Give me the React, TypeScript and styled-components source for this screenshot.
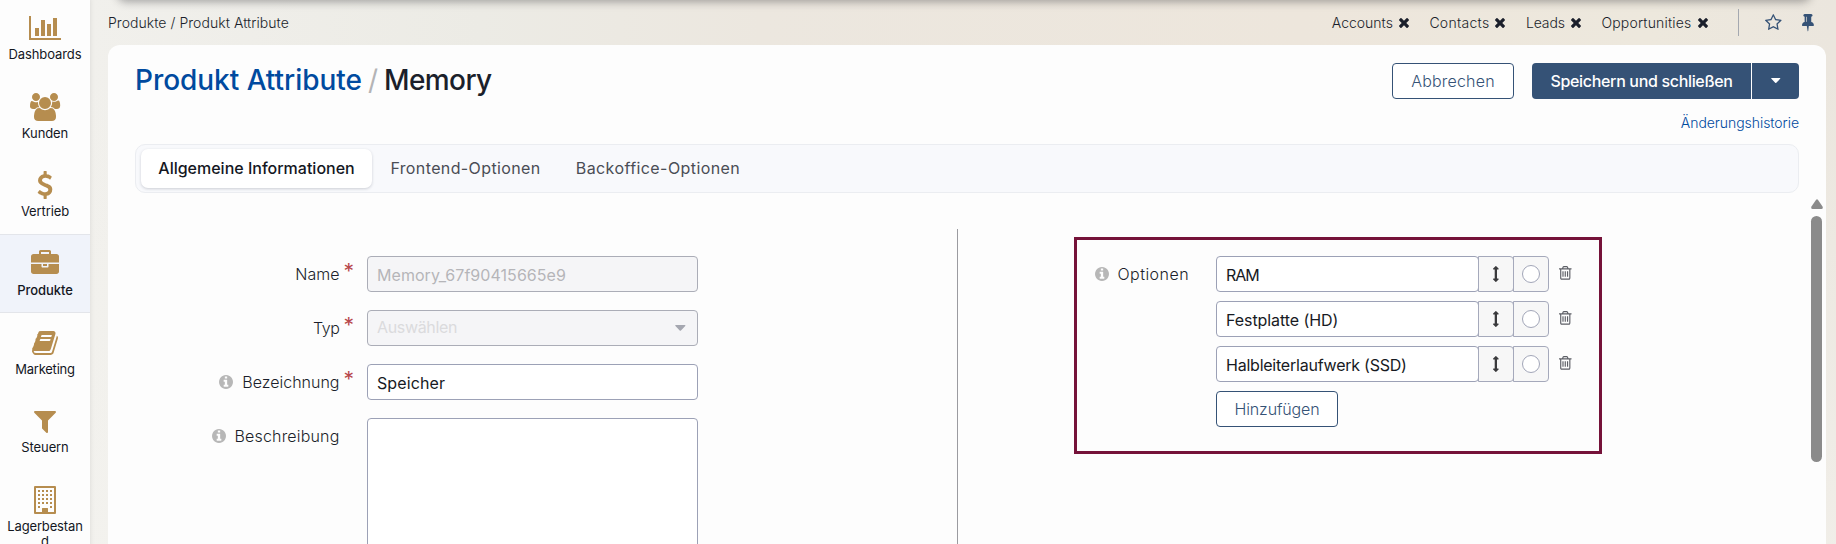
import React from 'react';
import styled, { createGlobalStyle, css } from 'styled-components';

const GlobalStyle = createGlobalStyle`
  *, *::before, *::after { box-sizing: border-box; }
  body {
    margin: 0;
    overflow: hidden;
    background: #f3f1ed;
    color: #1b1f2b;
    font-family: Inter, "Liberation Sans", sans-serif;
  }
  button, input, textarea { font-family: inherit; }
`;

const color = {
  gold: '#b68d4f',
  navy: '#355276',
  link: '#004a9f',
  surface: '#fdfdfd',
  fieldBorder: '#9ca1b6',
  wine: '#751239',
};

/* ---------- icons ---------- */

const icons = {
  chart: {
    box: [0, 0, 2048, 1792],
    d: 'M640 896v512h-256v-512h256zm384-512v1024h-256v-1024h256zm1024 1152v128h-2048v-1536h128v1408h1920zm-640-896v768h-256v-768h256zm384-384v1152h-256v-1152h256z',
  },
  users: {
    box: [0, 0, 1920, 1792],
    d: 'M593 896q-162 5-265 128h-134q-82 0-138-40.5t-56-118.5q0-353 124-353 6 0 43.5 21t97.5 42.5 119 21.5q67 0 133-23-5 37-5 66 0 159 93 293zm1071 637q0 120-73 189.5t-194 69.5h-874q-121 0-194-69.5t-73-189.5q0-53 3.5-103.5t14-109 26.5-108.5 43-97.5 62-81 85.5-53.5 111.5-20q10 0 43 21.5t73 48 107 48 135 21.5 135-21.5 107-48 73-48 43-21.5q61 0 111.5 20t85.5 53.5 62 81 43 97.5 26.5 108.5 14 109 3.5 103.5zm-1024-1277q0 106-75 181t-181 75-181-75-75-181 75-181 181-75 181 75 75 181zm704 384q0 159-112.5 271.5t-271.5 112.5-271.5-112.5-112.5-271.5 112.5-271.5 271.5-112.5 271.5 112.5 112.5 271.5zm576 225q0 78-56 118.5t-138 40.5h-134q-103-123-265-128 93-134 93-293 0-29-5-66 66 23 133 23 59 0 119-21.5t97.5-42.5 43.5-21q124 0 124 353zm-128-609q0 106-75 181t-181 75-181-75-75-181 75-181 181-75 181 75 75 181z',
  },
  dollar: {
    box: [0, 0, 1792, 1792],
    d: 'M1362 1185q0 153-99.5 263.5t-258.5 136.5v175q0 14-9 23t-23 9h-135q-13 0-22.5-9.5t-9.5-22.5v-175q-66-9-127.5-31t-101.5-44.5-74-48-46.5-37.5-17.5-18q-17-21-2-41l103-135q7-10 23-12 15-2 24 9l2 2q113 99 243 125 37 8 74 8 81 0 142.5-43t61.5-122q0-28-15-53t-33.5-42-58.5-37.5-66-32-80-32.5q-39-16-61.5-25t-61.5-26.5-62.5-31-56.5-35.5-53.5-42.5-43.5-49-35.5-58-21-66.5-8.5-78q0-138 98-242t255-134v-180q0-13 9.5-22.5t22.5-9.5h135q14 0 23 9t9 23v176q57 6 110.5 23t87 33.5 63.5 37.5 39 29 15 14q17 18 5 38l-81 146q-8 15-23 16-14 3-27-7-3-3-14.5-12t-39-26.5-58.5-32-74.5-26-85.5-11.5q-95 0-155 43t-60 111q0 26 8.5 48t29.5 41.5 39.5 33 56 31 60.5 27 70 27.5q53 20 81 31.5t76 35 75.5 42.5 62 50 53 63.5 31.5 76.5 13 94z',
  },
  briefcase: {
    box: [0, 0, 1792, 1792],
    d: 'M640 256h512v-128h-512v128zm1152 640v480q0 66-47 113t-113 47h-1472q-66 0-113-47t-47-113v-480h672v160q0 26 19 45t45 19h320q26 0 45-19t19-45v-160h672zm-768 0v128h-256v-128h256zm768-480v384h-1792v-384q0-66 47-113t113-47h352v-160q0-40 28-68t68-28h576q40 0 68 28t28 68v160h352q66 0 113 47t47 113z',
  },
  book: {
    box: [0, 0, 1792, 1792],
    d: 'M1703 478q40 57 18 129l-275 906q-19 64-76.5 107.5t-122.5 43.5h-923q-77 0-148.5-53.5t-99.5-131.5q-24-67-2-127 0-4 3-27t4-37q1-8-3-21.5t-3-19.5q2-11 8-21t16.5-23.5 16.5-23.5q23-38 45-91.5t30-91.5q3-10 .5-30t-.5-28q3-11 17-28t17-23q21-36 42-92t25-90q1-9-2.5-32t.5-28q4-13 22-30.5t22-22.5q19-26 42.5-84.5t27.5-96.5q1-8-3-25.5t-2-26.5q2-8 9-18t18-23 17-21q8-12 16.5-30.5t15-35 16-36 19.5-32 26.5-23.5 36-11.5 47.5 5.5l-1 3q38-9 51-9h761q74 0 114 56t18 130l-274 906q-36 119-71.5 153.5t-128.5 34.5h-869q-27 0-38 15-11 16-1 43 24 70 144 70h923q29 0 56-15.5t35-41.5l300-987q7-22 5-57 38 15 59 43zm-1064 2q-4 13 2 22.5t20 9.5h608q13 0 25.5-9.5t16.5-22.5l21-64q4-13-2-22.5t-20-9.5h-608q-13 0-25.5 9.5t-16.5 22.5zm-83 256q-4 13 2 22.5t20 9.5h608q13 0 25.5-9.5t16.5-22.5l21-64q4-13-2-22.5t-20-9.5h-608q-13 0-25.5 9.5t-16.5 22.5z',
  },
  filter: {
    box: [0, 0, 1792, 1792],
    d: 'M1595 295q17 41-14 70l-493 493v742q0 42-39 59-13 5-25 5-27 0-45-19l-256-256q-19-19-19-45v-486l-493-493q-31-29-14-70 17-39 59-39h1280q42 0 59 39z',
  },
  building: {
    box: [0, 0, 1792, 1792],
    d:
      'M192 64q0-64 64-64h1280q64 0 64 64v1664q0 64-64 64h-1280q-64 0-64-64zM320 128v1536h384v-224q0-32 32-32h320q32 0 32 32v224h384v-1536z' +
      [256, 512, 768, 1024]
        .map((y) => [448, 704, 960, 1216].map((x) => `M${x} ${y}h128v128h-128z`).join(''))
        .join('') +
      'M448 1280h128v128h-128zM1216 1280h128v128h-128z',
  },
  info: {
    box: [128, 128, 1536, 1536],
    d: 'M1152 1376v-160q0-14-9-23t-23-9h-96v-512q0-14-9-23t-23-9h-320q-14 0-23 9t-9 23v160q0 14 9 23t23 9h96v320h-96q-14 0-23 9t-9 23v160q0 14 9 23t23 9h448q14 0 23-9t9-23zm-128-896v-160q0-14-9-23t-23-9h-192q-14 0-23 9t-9 23v160q0 14 9 23t23 9h192q14 0 23-9t9-23zm640 416q0 209-103 385.5t-279.5 279.5-385.5 103-385.5-103-279.5-279.5-103-385.5 103-385.5 279.5-279.5 385.5-103 385.5 103 279.5 279.5 103 385.5z',
  },
  trash: {
    box: [192, 128, 1408, 1536],
    d: 'M704 736v576q0 14-9 23t-23 9h-64q-14 0-23-9t-9-23v-576q0-14 9-23t23-9h64q14 0 23 9t9 23zm256 0v576q0 14-9 23t-23 9h-64q-14 0-23-9t-9-23v-576q0-14 9-23t23-9h64q14 0 23 9t9 23zm256 0v576q0 14-9 23t-23 9h-64q-14 0-23-9t-9-23v-576q0-14 9-23t23-9h64q14 0 23 9t9 23zm128 724v-948h-896v948q0 22 7 40.5t14.5 27 10.5 8.5h832q3 0 10.5-8.5t14.5-27 7-40.5zm-672-1076h448l-48-117q-7-9-17-11h-317q-10 2-17 11zm928 32v64q0 14-9 23t-23 9h-96v948q0 83-47 143.5t-113 60.5h-832q-66 0-113-58.5t-47-141.5v-952h-96q-14 0-23-9t-9-23v-64q0-14 9-23t23-9h309l70-167q15-37 54-63t79-26h320q40 0 79 26t54 63l70 167h309q14 0 23 9t9 23z',
  },
  move: {
    box: [576, 0, 640, 1792],
    d: 'M1216 320q0 26-19 45t-45 19h-128v1024h128q26 0 45 19t19 45-19 45l-256 256q-19 19-45 19t-45-19l-256-256q-19-19-19-45t19-45 45-19h128v-1024h-128q-26 0-45-19t-19-45 19-45l256-256q19-19 45-19t45 19l256 256q19 19 19 45z',
  },
  star: {
    box: [64, 128, 1664, 1600],
    d: 'M1201 1004l306-297-422-62-189-382-189 382-422 62 306 297-73 421 378-199 377 199zm527-357q0 22-26 48l-363 354 86 500q1 7 1 20 0 50-41 50-19 0-40-12l-449-236-449 236q-22 12-40 12-21 0-31.5-14.5t-10.5-35.5q0-6 2-20l86-500-364-354q-25-27-25-48 0-37 56-46l502-73 225-455q19-41 49-41t49 41l225 455 502 73q56 9 56 46z',
  },
  pin: {
    box: [320, 128, 1152, 1600],
    d: 'M800 864v-448q0-14-9-23t-23-9-23 9-9 23v448q0 14 9 23t23 9 23-9 9-23zm672 352q0 26-19 45t-45 19h-429l-51 483q-2 12-10.5 20.5t-20.5 8.5h-1q-27 0-32-27l-76-485h-404q-26 0-45-19t-19-45q0-123 78.5-221.5t177.5-98.5v-512q-52 0-90-38t-38-90 38-90 90-38h640q52 0 90 38t38 90-38 90-90 38v512q99 0 177.5 98.5t78.5 221.5z',
  },
  close: {
    box: [302, 366, 1188, 1188],
    d: 'M1490 1322q0 40-28 68l-136 136q-28 28-68 28t-68-28l-294-294-294 294q-28 28-68 28t-68-28l-136-136q-28-28-28-68t28-68l294-294-294-294q-28-28-28-68t28-68l136-136q28-28 68-28t68 28l294 294 294-294q28-28 68-28t68 28l136 136q28 28 28 68t-28 68l-294 294 294 294q28 28 28 68z',
  },
  caret: { box: [0, 0, 10, 6], d: 'M0.6 0h8.8q0.8 0.3 0.2 0.9l-4 4.2q-0.6 0.6-1.2 0l-4-4.2q-0.6-0.6 0.2-0.9z' },
  up: { box: [0, 0, 12, 10], d: 'M5.1 0.7q0.9-1.1 1.8 0l4.6 6.9q1 2.2-1.1 2.4h-8.8q-2.1-0.2-1.1-2.4z' },
};

type IconName = keyof typeof icons;

const Svg = styled.svg`
  display: block;
  flex: none;
  overflow: visible;
  fill: currentColor;
`;

function Icon({ name, height }: { name: IconName; height: number }) {
  const { box, d } = icons[name];
  return (
    <Svg
      viewBox={box.join(' ')}
      width={(height * box[2]) / box[3]}
      height={height}
      fillRule={name === 'building' ? 'evenodd' : 'nonzero'}
      aria-hidden
    >
      <path d={d} />
    </Svg>
  );
}

/* ---------- shared text ---------- */

const Label = styled.span<{ $track?: number }>`
  letter-spacing: ${(p) => p.$track ?? 0}px;
  white-space: nowrap;
`;

/* ---------- sidebar ---------- */

const Shell = styled.div`
  display: flex;
  height: 544px;
  overflow: hidden;
  background:
    linear-gradient(180deg, rgba(238, 236, 230, 0) 60px, rgba(244, 243, 239, 0.6) 544px),
    linear-gradient(90deg, #f1f0ec 90px, #ecebe5 480px, #ece7df 760px, #ede6dc 1300px, #ede8dd 1650px, #ebe6de 1836px);
`;

const Sidebar = styled.nav`
  flex: none;
  width: 90px;
  height: 560px;
  margin-top: -2px;
  background: ${color.surface};
  box-shadow: 0 0 5px rgba(60, 60, 70, 0.13);
`;

const NavItem = styled.a<{ $active?: boolean }>`
  display: flex;
  flex-direction: column;
  align-items: center;
  gap: 5px;
  height: 78.7px;
  padding: 15px 7px 0;
  color: ${color.gold};
  border: 1px solid transparent;
  border-width: 1px 0 0;
  ${(p) =>
    p.$active &&
    css`
      background: #f0f3fa;
      border-color: #e3e5ea;
      border-width: 1px 0;
    `}
`;

const NavText = styled.span<{ $track: number; $active?: boolean }>`
  max-width: 78px;
  color: #14171f;
  font-size: 13px;
  font-weight: ${(p) => (p.$active ? 500 : 400)};
  line-height: 15px;
  letter-spacing: ${(p) => p.$track}px;
  text-align: center;
  overflow-wrap: anywhere;
`;

const navigation: { icon: IconName; text: string; track: number; active?: boolean }[] = [
  { icon: 'chart', text: 'Dashboards', track: -0.1 },
  { icon: 'users', text: 'Kunden', track: -0.1 },
  { icon: 'dollar', text: 'Vertrieb', track: -0.1 },
  { icon: 'briefcase', text: 'Produkte', track: -0.05, active: true },
  { icon: 'book', text: 'Marketing', track: -0.25 },
  { icon: 'filter', text: 'Steuern', track: -0.1 },
  { icon: 'building', text: 'Lagerbestand', track: -0.15 },
];

/* ---------- top bar ---------- */

const Main = styled.main`
  flex: 1;
  min-width: 0;
  display: flex;
  flex-direction: column;
  padding: 0 10px 0 18px;
`;

const HeaderEdge = styled.div`
  height: 12px;
  margin: -12px 16px 0 10px;
  border-radius: 0 0 8px 8px;
  box-shadow: 0 1px 9px 1px rgba(40, 40, 45, 0.38);
`;

const TopBar = styled.div`
  display: flex;
  align-items: center;
  height: 45px;
  padding: 0 12px 0 0;
  font-size: 14px;
  font-weight: 300;
`;

const Shortcuts = styled.div`
  display: flex;
  gap: 20.5px;
  margin-left: auto;
`;

const Shortcut = styled.span`
  display: flex;
  align-items: center;
  gap: 6px;
`;

const TopActions = styled.div`
  display: flex;
  align-items: center;
  gap: 21px;
  height: 27px;
  margin-left: 30px;
  padding-left: 26px;
  border-left: 1px solid #a4a8b0;
  color: ${color.navy};
`;

/* ---------- card ---------- */

const Card = styled.section`
  flex: 1;
  min-height: 0;
  display: flex;
  flex-direction: column;
  border-radius: 12px 12px 0 0;
  background: ${color.surface};
`;

const CardHeader = styled.header`
  display: flex;
  align-items: flex-start;
  justify-content: space-between;
  padding: 18px 27px 0 27px;
`;

const Title = styled.h1`
  display: flex;
  gap: 6px;
  margin: 0;
  font-size: 28px;
  font-weight: 500;
  line-height: 34px;
`;

const TitleLink = styled(Label)`
  color: ${color.link};
`;

const Slash = styled.span`
  color: #b4b4b6;
  font-weight: 400;
`;

const Buttons = styled.div`
  display: flex;
`;

const OutlineButton = styled.button<{ $width: number }>`
  width: ${(p) => p.$width}px;
  height: 36px;
  padding: 0;
  border: 1px solid ${color.navy};
  border-radius: 4px;
  background: #fff;
  color: ${color.navy};
  font-size: 16px;
  font-weight: 300;
`;

const PrimaryButton = styled.button`
  width: 219px;
  height: 36px;
  margin-left: 18px;
  padding: 0;
  border: 0;
  border-radius: 4px 0 0 4px;
  background: ${color.navy};
  color: #fff;
  font-size: 16px;
  font-weight: 500;
`;

const MenuButton = styled.button`
  display: flex;
  align-items: center;
  justify-content: center;
  width: 48px;
  height: 36px;
  padding: 0;
  border: 0;
  border-left: 1px solid #fff;
  border-radius: 0 4px 4px 0;
  background: ${color.navy};
  color: #fff;
`;

const HistoryRow = styled.div`
  display: flex;
  justify-content: flex-end;
  height: 45px;
  padding: 15px 27px 0 0;
  color: ${color.link};
  font-size: 14px;
  font-weight: 300;
  line-height: 17px;
`;

const Tabs = styled.div`
  display: flex;
  flex: none;
  align-items: center;
  height: 49px;
  margin: 0 27px;
  padding: 0 5px;
  border: 1px solid #ebedf1;
  border-radius: 10px;
  background: #f8f9fc;
`;

const Tab = styled.button<{ $active?: boolean; $width: number }>`
  width: ${(p) => p.$width}px;
  height: 39px;
  padding: 0 0 1px;
  border: 0;
  border-radius: 7px;
  background: transparent;
  color: #4a4d55;
  font-size: 16px;
  font-weight: 400;
  ${(p) =>
    p.$active &&
    css`
      background: #fff;
      color: #14171f;
      font-weight: 500;
      box-shadow: 0 1px 3px rgba(30, 40, 60, 0.2);
    `}
`;

/* ---------- form ---------- */

const ScrollArea = styled.div`
  display: flex;
  flex: 1;
  min-height: 0;
  overflow: hidden;
`;

const LeftColumn = styled.div`
  display: flex;
  flex-direction: column;
  flex: none;
  gap: 18px;
  width: 849px;
  padding-top: 63px;
`;

const Divider = styled.div`
  flex: none;
  width: 1px;
  margin-top: 36px;
  background: #9b9ba0;
`;

const RightColumn = styled.div`
  flex: 1;
  padding: 44px 0 0 116px;
`;

const FieldRow = styled.div`
  display: grid;
  grid-template-columns: 246px 331px;
  column-gap: 13px;
`;

const FieldLabel = styled.div`
  display: flex;
  align-items: center;
  justify-content: flex-end;
  height: 36px;
  font-size: 16px;
  font-weight: 300;
`;

const InfoMark = styled.span`
  margin-right: 9px;
  color: #b7b7b7;
`;

const Required = styled.span`
  width: 14.5px;
  height: 28px;
  color: #b8474c;
  font-size: 21px;
  font-weight: 400;
  line-height: 24px;
  text-align: right;
`;

const TextField = styled.input<{ $track: number }>`
  width: 100%;
  height: 36px;
  padding: 2px 9px 0;
  border: 1px solid ${color.fieldBorder};
  border-radius: 4px;
  outline: none;
  background: #fff;
  color: #171a23;
  font-size: 16px;
  letter-spacing: ${(p) => p.$track}px;
  &:disabled {
    border-color: #abadb7;
    background: #f5f5f7;
    color: #b5b5b9;
  }
`;

const SelectField = styled.div`
  display: flex;
  align-items: center;
  justify-content: space-between;
  height: 36px;
  padding: 0 11px 0 9px;
  border: 1px solid #abadb7;
  border-radius: 4px;
  background: #f5f5f7;
  color: #a5a7b0;
  font-size: 16px;
`;

const SelectHint = styled(Label)`
  padding-bottom: 2px;
  color: #dbdbdd;
`;

const TextArea = styled.textarea`
  width: 100%;
  height: 160px;
  border: 1px solid ${color.fieldBorder};
  border-radius: 4px;
  outline: none;
  background: #fff;
  resize: none;
`;

/* ---------- options ---------- */

const OptionsPanel = styled.div`
  display: grid;
  grid-template-columns: 112px 1fr;
  column-gap: 27px;
  width: 528px;
  height: 217px;
  padding-top: 16px;
  border: 3px solid ${color.wine};
`;

const OptionList = styled.div`
  display: flex;
  flex-direction: column;
  align-items: flex-start;
  gap: 9px;
`;

const OptionRow = styled.div`
  display: flex;
  align-items: center;
`;

const OptionField = styled(TextField)`
  width: 263px;
`;

const Addon = styled.span`
  display: flex;
  align-items: center;
  justify-content: center;
  width: 36px;
  height: 36px;
  margin-left: -1px;
  border: 1px solid #a5a9bb;
  border-radius: 0 4px 4px 0;
  background: #f7f7f7;
  color: #3a3a3c;
`;

const Radio = styled.span`
  width: 18px;
  height: 18px;
  border: 1px solid #a2a6b8;
  border-radius: 50%;
  background: #fff;
`;

const RemoveButton = styled.span`
  margin: 0 0 2px 10px;
  color: #5d5f66;
`;

const options = [
  { text: 'RAM', track: -1 },
  { text: 'Festplatte (HD)', track: -0.07 },
  { text: 'Halbleiterlaufwerk (SSD)', track: -0.23 },
];

/* ---------- scrollbar ---------- */

const ScrollTrack = styled.div`
  display: flex;
  flex-direction: column;
  align-items: center;
  flex: none;
  gap: 7px;
  width: 19px;
  padding: 6px 0 0;
  color: #8b8b8b;
`;

const ScrollThumb = styled.div`
  width: 11px;
  height: 246px;
  border-radius: 6px;
  background: #8b8b8b;
`;

const shortcuts = [
  { text: 'Accounts', track: 0 },
  { text: 'Contacts', track: 0.28 },
  { text: 'Leads', track: -0.1 },
  { text: 'Opportunities', track: 0.18 },
];

export default function App() {
  return (
    <>
      <GlobalStyle />
      <Shell>
        <Sidebar>
          {navigation.map((item) => (
            <NavItem key={item.text} $active={item.active}>
              <Icon name={item.icon} height={28} />
              <NavText $track={item.track} $active={item.active}>
                {item.text}
              </NavText>
            </NavItem>
          ))}
        </Sidebar>
        <Main>
          <HeaderEdge />
          <TopBar>
            <Label $track={0.05}>Produkte / Produkt Attribute</Label>
            <Shortcuts>
              {shortcuts.map((s) => (
                <Shortcut key={s.text}>
                  <Label $track={s.track}>{s.text}</Label>
                  <Icon name="close" height={10} />
                </Shortcut>
              ))}
            </Shortcuts>
            <TopActions>
              <Icon name="star" height={16} />
              <Icon name="pin" height={16.5} />
            </TopActions>
          </TopBar>
          <Card>
            <CardHeader>
              <Title>
                <TitleLink $track={-0.04}>Produkt Attribute</TitleLink>
                <Slash>/</Slash>
                <Label $track={-0.6}>Memory</Label>
              </Title>
              <Buttons>
                <OutlineButton $width={122}>
                  <Label $track={0.2}>Abbrechen</Label>
                </OutlineButton>
                <PrimaryButton>
                  <Label $track={-0.33}>Speichern und schließen</Label>
                </PrimaryButton>
                <MenuButton>
                  <Icon name="caret" height={5.7} />
                </MenuButton>
              </Buttons>
            </CardHeader>
            <HistoryRow>
              <Label $track={-0.05}>Änderungshistorie</Label>
            </HistoryRow>
            <Tabs>
              <Tab $active $width={231}>
                <Label>Allgemeine Informationen</Label>
              </Tab>
              <Tab $width={187}>
                <Label $track={0.38}>Frontend-Optionen</Label>
              </Tab>
              <Tab $width={198}>
                <Label $track={0.42}>Backoffice-Optionen</Label>
              </Tab>
            </Tabs>
            <ScrollArea>
              <LeftColumn>
                <FieldRow>
                  <FieldLabel>
                    <Label>Name</Label>
                    <Required>*</Required>
                  </FieldLabel>
                  <TextField $track={0.05} disabled defaultValue="Memory_67f90415665e9" />
                </FieldRow>
                <FieldRow>
                  <FieldLabel>
                    <Label $track={-0.4}>Typ</Label>
                    <Required>*</Required>
                  </FieldLabel>
                  <SelectField>
                    <SelectHint $track={-0.35}>Auswählen</SelectHint>
                    <Icon name="caret" height={6.4} />
                  </SelectField>
                </FieldRow>
                <FieldRow>
                  <FieldLabel>
                    <InfoMark>
                      <Icon name="info" height={14} />
                    </InfoMark>
                    <Label>Bezeichnung</Label>
                    <Required>*</Required>
                  </FieldLabel>
                  <TextField $track={0.1} defaultValue="Speicher" />
                </FieldRow>
                <FieldRow>
                  <FieldLabel>
                    <InfoMark>
                      <Icon name="info" height={14} />
                    </InfoMark>
                    <Label $track={0.17}>Beschreibung</Label>
                    <Required />
                  </FieldLabel>
                  <TextArea />
                </FieldRow>
              </LeftColumn>
              <Divider />
              <RightColumn>
                <OptionsPanel>
                  <FieldLabel>
                    <InfoMark>
                      <Icon name="info" height={14} />
                    </InfoMark>
                    <Label $track={0.45}>Optionen</Label>
                  </FieldLabel>
                  <OptionList>
                    {options.map((o) => (
                      <OptionRow key={o.text}>
                        <OptionField $track={o.track} defaultValue={o.text} />
                        <Addon>
                          <Icon name="move" height={16} />
                        </Addon>
                        <Addon>
                          <Radio />
                        </Addon>
                        <RemoveButton>
                          <Icon name="trash" height={13.7} />
                        </RemoveButton>
                      </OptionRow>
                    ))}
                    <OutlineButton $width={122}>
                      <Label $track={-0.15}>Hinzufügen</Label>
                    </OutlineButton>
                  </OptionList>
                </OptionsPanel>
              </RightColumn>
              <ScrollTrack>
                <Icon name="up" height={10} />
                <ScrollThumb />
              </ScrollTrack>
            </ScrollArea>
          </Card>
        </Main>
      </Shell>
    </>
  );
}
